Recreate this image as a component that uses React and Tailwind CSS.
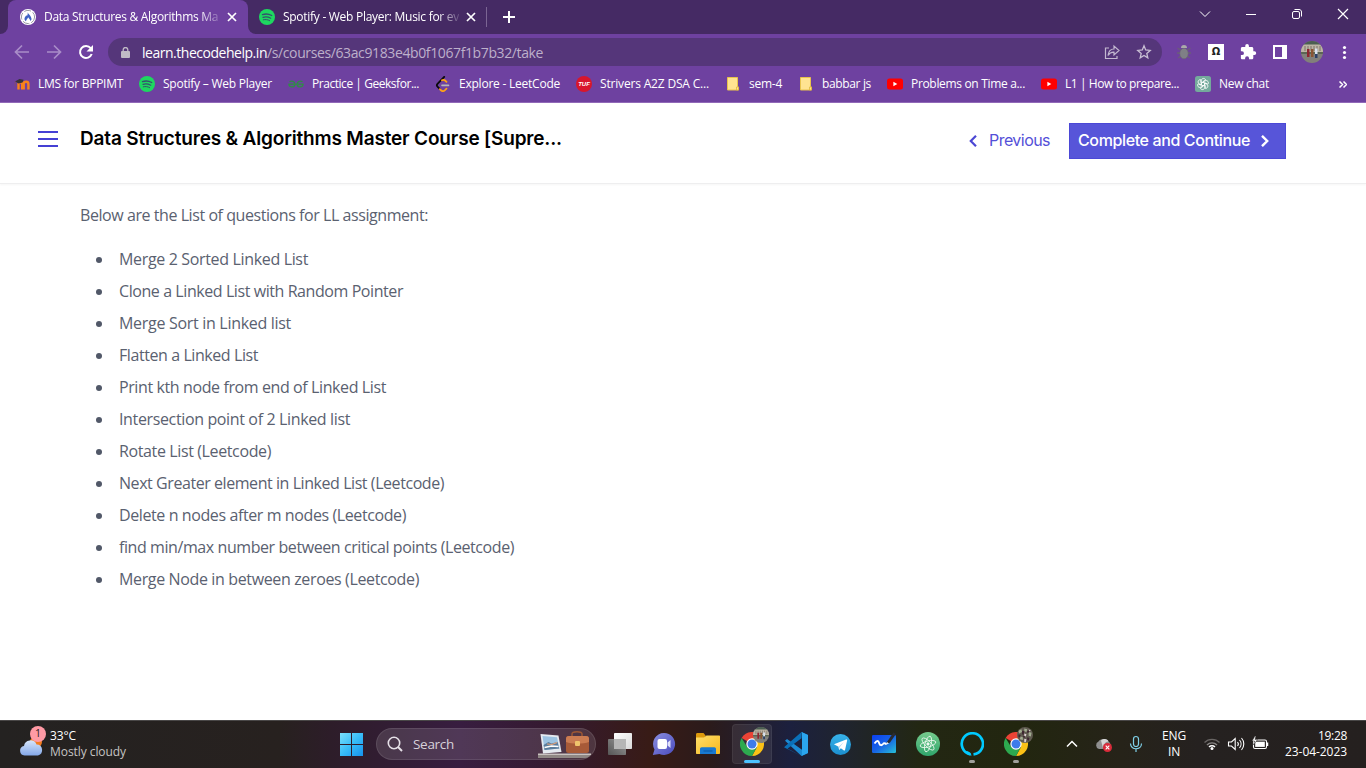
import React, { useLayoutEffect, useRef, useState } from "react";

/* Text run whose tracking is adjusted so that it fills a given width. */
function Label({ w, children, className = "" }) {
  const ref = useRef(null);
  const [tracking, setTracking] = useState(0);
  useLayoutEffect(() => {
    const natural = ref.current.getBoundingClientRect().width;
    setTracking((w - natural) / ref.current.textContent.length);
  }, [w]);
  return (
    <span className={`block shrink-0 whitespace-pre ${className}`} style={{ width: w }}>
      <span ref={ref} className="inline-block" style={{ letterSpacing: tracking }}>
        {children}
      </span>
    </span>
  );
}

const Spotify = () => (
  <svg className="size-4 shrink-0" viewBox="0 0 16 16" fill="none" strokeLinecap="round">
    <circle cx="8" cy="8" r="8" fill="#1ed760" />
    <path d="M3.500 5.600c3-.9 6.500-.6 9.200.9" stroke="#35506d" strokeWidth="1.400" />
    <path d="M4 8.300c2.600-.7 5.400-.4 7.700.9" stroke="#35506d" strokeWidth="1.200" />
    <path d="M4.300 10.800c2.200-.5 4.400-.3 6.300.8" stroke="#35506d" strokeWidth="1" />
  </svg>
);

const CodeHelp = () => (
  <svg className="size-4 shrink-0" viewBox="0 0 16 16" fill="none">
    <circle cx="8" cy="8" r="8" fill="#fff" />
    <circle cx="8" cy="8" r="6.600" stroke="#8d8f99" strokeWidth=".9" strokeDasharray="7 2" />
    <path d="M7.800 3.200c.3 2 3.400 3.200 3.700 6.600.1.900-.4 1.700-1.100 2.200-.3-1.700-1.400-2.500-2.200-3.800-.6 1.700-1.900 2.200-2.200 4C4.900 11.500 4.300 10.600 4.500 9.500c.2-1.400 1.300-2.200 1.700-3.300l.8.900c.6-1.200.9-2.400.8-3.900z" fill="#3f62c4" />
  </svg>
);

const Close = () => (
  <svg className="h-[10px] w-[10px] shrink-0" viewBox="0 0 10 10" stroke="#fff" strokeWidth="1.700">
    <path d="M1 1l8 8M9 1L1 9" />
  </svg>
);

const Moodle = () => (
  <svg className="size-4 shrink-0" viewBox="0 0 16 16" fill="none">
    <path d="M4.500 13.500V8.200c0-2.600 3.700-2.600 3.700 0v5.300M9.700 13.500V8c0-3 4.700-3 4.700 0v5.500" stroke="#f7821b" strokeWidth="2.400" />
    <path d="M1 5.500L5.500 3l4 .8-1 2.600-3.800 1z" fill="#38333a" />
    <path d="M1.200 5.500v5" stroke="#8a4b63" strokeWidth=".8" />
  </svg>
);

const Geeks = () => (
  <svg className="size-4 shrink-0" viewBox="0 0 16 16" fill="none" stroke="#2f8d46" strokeWidth="1.300">
    <path d="M.3 8.200h15.400M1.500 5.700C3.500 4.300 6.800 5.300 6.800 8.200c0 3.500-5.400 3.800-5.900 0M14.500 5.700C12.500 4.300 9.200 5.300 9.200 8.200c0 3.500 5.400 3.800 5.900 0" />
  </svg>
);

const Leet = () => (
  <svg className="size-4 shrink-0" viewBox="0 0 16 16" fill="none" strokeLinecap="round">
    <path d="M9.200.9L2.500 7.800c-.8.900-.8 2 0 2.800l2.200 2.300" stroke="#0a0a0a" strokeWidth="1.800" />
    <path d="M7 4.300c1.300-.8 2.200-.6 3.100.2l1.400 1.300M4.900 13.100l1.100 1.200c1.200 1 2.700.9 3.700 0l1.800-1.700" stroke="#ffa116" strokeWidth="1.800" />
    <path d="M7 9.400h6.500" stroke="#b7b7b9" strokeWidth="1.600" />
  </svg>
);

const Tuf = () => (
  <span className="flex size-4 shrink-0 items-center justify-center rounded-full bg-[#d8162c] font-['Liberation_Sans'] text-[6px] font-bold italic leading-none text-white">
    TUF
  </span>
);

const Folder = () => (
  <svg className="size-4 shrink-0" viewBox="0 0 16 16">
    <path d="M2.500 1.500h10v9.500h1v3h-11z" fill="#ffe391" stroke="#e8c34c" strokeWidth="1" />
    <path d="M11.500 11h2v3h-2z" fill="#ffe391" stroke="#e0b73c" strokeWidth=".8" />
  </svg>
);

const Youtube = () => (
  <svg className="size-4 shrink-0" viewBox="0 0 16 16">
    <rect x="0" y="2.500" width="16" height="11" rx="2.500" fill="#f00" />
    <path d="M6.400 5.700v4.600L10.300 8z" fill="#fff" />
  </svg>
);

const petals = [0, 60, 120, 180, 240, 300];
const Gpt = () => (
  <svg className="size-4 shrink-0" viewBox="0 0 16 16" fill="none" stroke="#fff" strokeWidth=".8">
    <rect width="16" height="16" rx="2.500" fill="#74aa9c" stroke="none" />
    {petals.map((a) => (
      <path key={a} transform={`rotate(${a} 8 8)`} d="M8 9.900L6.300 8.900V4.700C6.300 2 9.900 1.700 10.600 3.900L8 5.600" />
    ))}
  </svg>
);

const bookmarks = [
  [Moodle, "LMS for BPPIMT", 85],
  [Spotify, "Spotify – Web Player", 109],
  [Geeks, "Practice | Geeksfor...", 107],
  [Leet, "Explore - LeetCode", 101],
  [Tuf, "Strivers A2Z DSA C...", 109],
  [Folder, "sem-4", 33],
  [Folder, "babbar js", 49],
  [Youtube, "Problems on Time a...", 114],
  [Youtube, "L1 | How to prepare...", 114],
  [Gpt, "New chat", 50],
];

function TabStrip() {
  return (
    <div className="flex h-[34px] bg-[#452a64] text-[12px] text-white">
      <div className="h-[34px] w-2 bg-[#6e41a0]">
        <div className="h-full w-full rounded-br-lg bg-[#452a64]" />
      </div>
      <div className="flex w-[240px] items-center rounded-t-lg bg-[#6e41a0] pl-3">
        <CodeHelp />
        <div className="ml-2 w-[175px] [mask-image:linear-gradient(to_right,#000_155px,transparent_180px)]">
          <Label w={174}>Data Structures &amp; Algorithms Ma</Label>
        </div>
        <span className="ml-2"><Close /></span>
      </div>
      <div className="h-[34px] w-2 bg-[#6e41a0]">
        <div className="h-full w-full rounded-bl-lg bg-[#452a64]" />
      </div>
      <div className="flex items-center pl-[3px]">
        <Spotify />
        <div className="ml-2 w-[176px] [mask-image:linear-gradient(to_right,#000_155px,transparent_180px)]">
          <Label w={176}>Spotify - Web Player: Music for ev</Label>
        </div>
        <span className="ml-[7px]"><Close /></span>
        <div className="ml-[10px] h-5 w-px bg-[#7b6593]" />
        <svg className="ml-4 size-3" viewBox="0 0 12 12" stroke="#fff" strokeWidth="2"><path d="M6 0v12M0 6h12" /></svg>
      </div>
      <div className="ml-auto flex h-7 items-center">
        <svg className="h-4 w-[46px]" viewBox="0 0 46 16" fill="none" stroke="#fff"><path d="M18 5.500l5 5 5-5" /></svg>
        <svg className="h-4 w-[46px]" viewBox="0 0 46 16" fill="none" stroke="#fff"><path d="M18 8.500h10" /></svg>
        <svg className="h-4 w-[46px]" viewBox="0 0 46 16" fill="none" stroke="#fff">
          <rect x="18.500" y="5.500" width="7" height="7" rx="1.500" />
          <path d="M20.500 3.500h4.500c1.500 0 2.500 1 2.500 2.500v4.500" />
        </svg>
        <svg className="h-4 w-[46px]" viewBox="0 0 46 16" fill="none" stroke="#fff" strokeWidth="1.200"><path d="M18 3l10 10M28 3L18 13" /></svg>
      </div>
    </div>
  );
}

const Photo = ({ crowd }) => (
  <svg className="size-full" viewBox="0 0 22 22">
    <clipPath id={crowd ? "pc" : "pa"}><circle cx="11" cy="11" r="11" /></clipPath>
    {crowd ? (
      <g clipPath="url(#pc)">
        <rect width="22" height="22" fill="#5f5a4f" />
        <path d="M2 5l4-2 1 4-4 2zM10 2l4 1-1 4-3-1zM16 7l4 1-1 5-3-1zM5 13l3 1v4l-4-1z" fill="#a3ad92" />
        <path d="M7 5l3 1-1 5-2-1zM14 5h3l-1 3h-2zM2 10l3 1-1 3H2zM14 14l3 1-1 4-2-1zM8 12l3 1-1 3z" fill="#3d2430" />
        <path d="M10 9l3 1-1 3-2-1zM10 16l3 1-1 4h-2zM16 3l3 2-2 1z" fill="#e0d0d6" />
      </g>
    ) : (
      <g clipPath="url(#pa)">
        <rect width="22" height="22" fill="#82807a" />
        <rect width="22" height="4" fill="#4b5f52" />
        <rect y="3.500" width="22" height="7.500" fill="#bdb5a4" />
        <path d="M4 5v5M7 5v5M10 5v5M13 5v5M16 5v5M19 5v5" stroke="#7a736b" strokeWidth="1" />
        <rect y="11" width="22" height="2" fill="#5b6654" />
        <path d="M6 8h2.500v8H6z" fill="#8e2530" />
        <path d="M10 8h2.500v8H10z" fill="#8a5532" />
        <path d="M14 7.500h2.500V13H14z" fill="#dae3f1" />
        <path d="M14 13h2.500v4H14z" fill="#2c4168" />
      </g>
    )}
  </svg>
);

function Toolbar() {
  return (
    <div className="flex h-9 items-center bg-[#6e41a0]">
      <svg className="ml-[6px] h-8 w-8" viewBox="-16 -16 32 32" fill="none" stroke="#a98dc8" strokeWidth="1.700"><path d="M7 0H-6M0-6.500L-6.500 0 0 6.500" /></svg>
      <svg className="h-8 w-8" viewBox="-16 -16 32 32" fill="none" stroke="#a98dc8" strokeWidth="1.700"><path d="M-7 0H6M0-6.500L6.500 0 0 6.500" /></svg>
      <svg className="h-8 w-8" viewBox="-16 -16 32 32" fill="none" stroke="#fff" strokeWidth="2"><path d="M4.700-3.800A6 6 0 1 0 5.700 2" /><path d="M7-7v6.500H.5z" fill="#fff" stroke="none" /></svg>
      <div className="ml-[6px] flex h-7 w-[1054px] items-center rounded-full bg-[#55367a] pl-[13px] text-[14px] text-[#bdb0cb]">
        <svg className="h-[11px] w-[9px]" viewBox="0 0 9 11" fill="none"><rect y="4" width="9" height="7" rx="1" fill="#c0bac6" /><path d="M2.200 5V2.800a2.300 2.300 0 0 1 4.600 0V5" stroke="#c0bac6" strokeWidth="1.300" /></svg>
        <Label w={125} className="ml-3 text-white">learn.thecodehelp.in</Label>
        <Label w={276}>/s/courses/63ac9183e4b0f1067f1b7b32/take</Label>
        <svg className="ml-auto h-8 w-8" viewBox="-16 -16 32 32" fill="none" stroke="#c3b8d0" strokeWidth="1.200">
          <path d="M-3-4h-3.500v10.500H5V4" />
          <path d="M-4 3.500C-3.500-.5-1.500-3 2-3v-3l5 4.500-5 4.500V.2C-.8 0-2.500 1-4 3.500z" />
        </svg>
        <svg className="mr-[2px] h-8 w-8" viewBox="-16 -16 32 32" fill="none" stroke="#c9bfd4" strokeWidth="1.300"><path d="M0-6.200l1.700 4.200 4.500.4-3.400 3 1 4.500L0 3.500-3.800 5.900l1-4.500-3.400-3 4.500-.4z" /></svg>
      </div>
      <div className="ml-[6px] flex items-center">
        <svg className="h-8 w-8" viewBox="-16 -16 32 32" fill="none" stroke="#6b5d78" strokeWidth="1.300">
          <path d="M-6.500-4l3 2M6.500-4l-3 2M-7 1H7M-6 6l3-2M6 6L3 4" />
          <ellipse cy="1.500" rx="4.200" ry="5.300" fill="#7f7f86" stroke="#68646f" strokeWidth=".6" />
          <path d="M-3-4a3 3 0 0 1 6 0z" fill="#aaa" stroke="none" />
        </svg>
        <span className="mx-2 flex size-4 items-center justify-center bg-white font-['DejaVu_Sans'] text-[10px] font-bold leading-none text-[#222]">Ω</span>
        <svg className="h-8 w-8" viewBox="-4.500 -4 32 32" fill="#fff"><path transform="scale(.73) translate(4 4.500)" d="M20.500 11H19V7c0-1.100-.9-2-2-2h-4V3.500a2.500 2.500 0 0 0-5 0V5H4c-1.100 0-2 .9-2 2v3.800h1.500a2.700 2.700 0 0 1 0 5.400H2V20c0 1.100.9 2 2 2h3.800v-1.500a2.700 2.700 0 0 1 5.400 0V22H17c1.100 0 2-.9 2-2v-4h1.500a2.500 2.500 0 0 0 0-5z" /></svg>
        <svg className="h-8 w-8" viewBox="-16 -16 32 32"><path d="M-7-7H7V7H-7zM-5-5V5H2V-5z" fill="#fff" fillRule="evenodd" /></svg>
        <span className="mx-[5px] size-[22px]"><Photo /></span>
        <svg className="h-8 w-8" viewBox="-16 -16 32 32" fill="#fff"><circle cx=".5" cy="-4.500" r="1.600" /><circle cx=".5" cy=".5" r="1.600" /><circle cx=".5" cy="5.500" r="1.600" /></svg>
      </div>
    </div>
  );
}

function Header() {
  return (
    <header className="flex h-[81px] shrink-0 items-start border-b border-[#eeeeef] pl-[38px] pr-20 shadow-[0_1px_2px_rgba(0,0,0,0.04)]">
      <div className="mt-7 flex w-5 flex-col gap-[5px]">
        <div className="h-0.5 bg-[#4540d4]" />
        <div className="h-0.5 bg-[#4540d4]" />
        <div className="h-0.5 bg-[#4540d4]" />
      </div>
      <h1 className="ml-[22px] mt-[22px] font-[Inter] text-[19px] font-semibold leading-7 text-black">
        <Label w={482}>Data Structures &amp; Algorithms Master Course [Supre...</Label>
      </h1>
      <div className="ml-auto mt-5 flex h-9 items-center font-[Inter] text-[16px] leading-6 text-[#5450d8]">
        <svg className="h-3 w-2" viewBox="0 0 8 12" fill="none" stroke="#4b47d4" strokeWidth="2.200"><path d="M7 .8L1.800 6 7 11.200" /></svg>
        <Label w={61} className="mb-0.5 ml-3">Previous</Label>
        <button className="ml-[19px] flex h-9 w-[217px] items-center border border-[#4b48d6] bg-[#5755d9] pl-2 font-medium text-white">
          <Label w={172} className="mb-0.5">Complete and Continue</Label>
          <svg className="ml-[11px] h-3 w-2" viewBox="0 0 8 12" fill="none" stroke="#fff" strokeWidth="2.400"><path d="M1 .8L6.200 6 1 11.200" /></svg>
        </button>
      </div>
    </header>
  );
}

const questions = [
  ["Merge 2 Sorted Linked List", 189],
  ["Clone a Linked List with Random Pointer", 284],
  ["Merge Sort in Linked list", 172],
  ["Flatten a Linked List", 139],
  ["Print kth node from end of Linked List", 267],
  ["Intersection point of 2 Linked list", 231],
  ["Rotate List (Leetcode)", 152],
  ["Next Greater element in Linked List (Leetcode)", 325],
  ["Delete n nodes after m nodes (Leetcode)", 287],
  ["find min/max number between critical points (Leetcode)", 395],
  ["Merge Node in between zeroes (Leetcode)", 300],
];

const Chrome = ({ crowd }) => (
  <div className="relative size-6">
    <svg className="size-6" viewBox="0 0 24 24">
      <path d="M12 12L1.600 6A12 12 0 0 1 22.400 6z" fill="#ea4335" />
      <path d="M12 6.500h10.700A12 12 0 0 1 12 24l5-9z" fill="#fbc116" />
      <path d="M1.600 6L7.200 15 12 17.500 16.800 15 12 24A12 12 0 0 1 1.600 6z" fill="#2da94f" />
      <circle cx="12" cy="12" r="5.700" fill="#fff" />
      <circle cx="12" cy="12" r="4.500" fill="#3e7bea" />
    </svg>
    <span className="absolute -top-[5px] left-[13px] size-4"><Photo crowd={crowd} /></span>
  </div>
);

const TaskView = () => (
  <svg className="size-6" viewBox="0 0 24 24">
    <defs>
      <linearGradient id="tv" x1="0" y1="0" x2="1" y2="1"><stop stopColor="#fff" /><stop offset="1" stopColor="#d9d9d9" /></linearGradient>
      <linearGradient id="tv2" x1="1" y1="0" x2="0" y2="1"><stop stopColor="#999" /><stop offset="1" stopColor="#555" /></linearGradient>
    </defs>
    <rect x="6" y="1" width="18" height="16" rx=".8" fill="url(#tv)" />
    <rect y="7" width="18" height="16" rx=".8" fill="url(#tv2)" />
    <rect x="6" y="7" width="12" height="10" fill="#b6b6b6" />
  </svg>
);
const Chat = () => (
  <svg className="size-6" viewBox="0 0 24 24">
    <defs><linearGradient id="ch" x1="0" y1="0" x2="1" y2="1"><stop stopColor="#8a8ee0" /><stop offset="1" stopColor="#4a4bbd" /></linearGradient></defs>
    <path d="M12 1a11 11 0 1 1-4.500 21L.8 23l1.700-5.500A11 11 0 0 1 12 1z" fill="url(#ch)" />
    <rect x="5.500" y="7" width="9.500" height="10" rx="2" fill="#fff" />
    <path d="M15.500 10.500L18.500 8v8l-3-2.500z" fill="#dfe0fb" />
  </svg>
);
const Explorer = () => (
  <svg className="size-6" viewBox="0 0 24 24">
    <defs><linearGradient id="ex" x1="0" y1="0" x2="1" y2="1"><stop stopColor="#ffdf6b" /><stop offset="1" stopColor="#f6b81c" /></linearGradient></defs>
    <path d="M0 2.500C0 1.500.6 1 1.500 1h6l2 2.500V9H0z" fill="#dd9a0c" />
    <path d="M0 5.500h8l2.500-2H23c.6 0 1 .4 1 1V21c0 .6-.4 1-1 1H1c-.6 0-1-.4-1-1z" fill="url(#ex)" />
    <path d="M4 22v-5c0-1 .7-1.700 1.700-1.700h12.600c1 0 1.700.7 1.700 1.700v5z" fill="#1879d0" />
    <path d="M7.500 19h9" stroke="#0c5cab" strokeWidth="1.200" />
  </svg>
);
const VsCode = () => (
  <svg className="size-6" viewBox="0 0 24 24">
    <path d="M17.500 0L24 3v18l-6.500 3L1 8.800 3 7l15 10.800V6z" fill="#1b8ad3" />
    <path d="M17.500 24L0 15.300 17.500 0v6.300L3 17 1 15.200z" fill="#0a70b8" />
    <path d="M17.500 0L24 3v18l-6.500 3c.4-.5.500-.8.500-1.300V1.500c0-.6-.1-1-.5-1.500z" fill="#2ba5ee" />
  </svg>
);
const Telegram = () => (
  <svg className="size-[21px]" viewBox="0 0 24 24">
    <defs><linearGradient id="tg" x2="0" y2="1"><stop stopColor="#37b3ea" /><stop offset="1" stopColor="#1c8fd0" /></linearGradient></defs>
    <circle cx="12" cy="12" r="12" fill="url(#tg)" />
    <path d="M4.500 11.800L18.500 6.400c.8-.2 1.300.2 1 1.200l-2.300 10.600c-.2.800-.7.900-1.300.6L12.400 16.200l-2 2-.6-3.700-5.300-2.700z" fill="#fff" />
    <path d="M9.800 14.500l6-5.300-4.700 5.800-.7 3.200z" fill="#b9d9ee" />
  </svg>
);
const Whiteboard = () => (
  <svg className="size-6" viewBox="0 0 24 24">
    <defs><linearGradient id="wb" x1="0" y1="0" x2="1" y2="1"><stop stopColor="#0b3ff2" /><stop offset=".5" stopColor="#1763e5" /><stop offset="1" stopColor="#27c1d6" /></linearGradient></defs>
    <rect y="3" width="24" height="18" rx="1.300" fill="url(#wb)" />
    <path d="M2.500 11.500c2.500-3.500 4-3 4.700-.3.700 2.600 2.500 2.400 3.800.8 1-1.300 2-.9 3.500.2" fill="none" stroke="#fff" strokeWidth="1.900" />
    <path d="M14.500 10.500l1.500-2L21.500.3 24 2l-6 8.500-3 1.500z" fill="#292b31" />
    <path d="M13.500 13l1.500-3 2 1.500z" fill="#e7ecf4" />
  </svg>
);
const Atom = () => (
  <svg className="size-6" viewBox="0 0 24 24" fill="none" stroke="#e5f5ea" strokeWidth=".9">
    <defs><linearGradient id="at" x2="0" y2="1"><stop stopColor="#76cb8d" /><stop offset="1" stopColor="#2fa56b" /></linearGradient></defs>
    <circle cx="12" cy="12" r="12" fill="url(#at)" stroke="none" />
    <ellipse cx="12" cy="12" rx="3" ry="8" transform="rotate(15 12 12)" />
    <ellipse cx="12" cy="12" rx="3" ry="8" transform="rotate(75 12 12)" />
    <ellipse cx="12" cy="12" rx="3" ry="8" transform="rotate(135 12 12)" />
    <circle cx="12" cy="12" r="1.200" fill="#fff" />
  </svg>
);
const Alexa = () => (
  <svg className="size-6" viewBox="0 0 24 24" fill="none" stroke="#00caff" strokeWidth="2.700">
    <path d="M10.500 22.300A10.600 10.600 0 1 1 13.500 22.400" />
    <path d="M11.500 23.700c-.2-2.300-2-3.700-4.500-4.600l-2 .5 3 2.800 3.500 1.300z" fill="#00caff" stroke="none" />
  </svg>
);

const apps = [
  [TaskView], [Chat], [Explorer], [Chrome, "active"], [VsCode], [Telegram], [Whiteboard], [Atom], [Alexa, "open"], [Chrome, "crowd"],
];

function Taskbar() {
  return (
    <footer className="flex h-12 items-center bg-[linear-gradient(to_right,#242221_0,#27211f_280px,#2d1d29_330px,#381d40_460px,#351a2f_560px,#381b16_650px,#2b1b1b_710px,#1c203e_790px,#1f2430_840px,#232713_920px,#22260f_1020px,#262319_1120px,#252120_1200px,#25201f_1366px)] text-white shadow-[inset_0_1px_0_#494747]">
      <div className="flex w-[330px] items-center pl-[19px]">
        <div className="relative mb-0.5 h-[29px] w-[26px]">
          <svg className="h-[29px] w-[26px]" viewBox="0 0 26 29">
            <defs><linearGradient id="cl" x2="0" y2="1"><stop stopColor="#d6e5fb" /><stop offset="1" stopColor="#84a8e9" /></linearGradient></defs>
            <circle cx="17" cy="13" r="6" fill="#f37b1f" />
            <path d="M5.500 26.500a4.800 4.800 0 0 1-.5-9.500 6.500 6.500 0 0 1 12.500-1.500 5.600 5.600 0 0 1 1.500 11z" fill="url(#cl)" />
          </svg>
          <span className="absolute -top-[3px] left-[11px] flex size-4 items-center justify-center rounded-full bg-[#ff9aa5] text-[10.500px] leading-none text-[#2a1a1c]">1</span>
        </div>
        <div className="mb-px ml-[5px] text-[12px] leading-4">
          <Label w={26}>33°C</Label>
          <Label w={76} className="text-[#c6c4c3]">Mostly cloudy</Label>
        </div>
      </div>
      <div className="flex w-[46px] justify-center pr-[3px]">
        <svg className="mt-px size-[23px]" viewBox="0 0 23 23">
          <defs><linearGradient id="wn" x1="0" y1="0" x2="23" y2="23" gradientUnits="userSpaceOnUse"><stop stopColor="#7be0fb" /><stop offset=".5" stopColor="#38bdf8" /><stop offset="1" stopColor="#1592ee" /></linearGradient></defs>
          <path d="M0 0h11v11H0zM12 0h11v11H12zM0 12h11v11H0zM12 12h11v11H12z" fill="url(#wn)" />
        </svg>
      </div>
      <div className="flex h-8 w-[220px] items-center rounded-full border border-white/10 bg-white/12 pl-[10px] text-[13.500px] text-[#d7d1da]">
        <svg className="size-4" viewBox="0 0 16 16" fill="none" stroke="#e6e1e8" strokeWidth="1.600"><circle cx="7" cy="7" r="5.700" /><path d="M11 11l4 4" strokeWidth="2" /></svg>
        <Label w={41} className="ml-[10px]">Search</Label>
        <svg className="ml-[84px] h-[27px] w-[54px]" viewBox="0 0 54 27">
          <path d="M0 23h53c-1 2-3 4-6 4H0z" fill="#8f8784" />
          <path d="M0 22.500h53v1.500H0z" fill="#c9c2c0" />
          <path d="M2.500 3l18 1.500 3 16.500L5 22.500z" fill="#e5eaf0" />
          <path d="M4.500 5l14.500 1.200 2.300 11.300L6.500 19z" fill="#9cc3e2" />
          <path d="M5.500 14l5-3 3 1.500 6-1.500 1.800 6.500L6.500 19z" fill="#5b7d9c" />
          <path d="M9 13l5 .5 5-2" stroke="#e2a179" strokeWidth="1.200" fill="none" />
          <path d="M6.500 16.500l7-1.500 7 .5" stroke="#fff" strokeWidth="1.500" fill="none" />
          <path d="M34 5V3c0-3 10-3 10 0v2" stroke="#9c5734" strokeWidth="1.500" fill="none" />
          <rect x="28" y="5" width="23" height="17" rx="2.500" fill="#a75a38" />
          <path d="M28 8c0-2 1-3 3-3h17c2 0 3 1 3 3v3c-6 2-17 2-23 0z" fill="#cb7c52" />
          <rect x="37" y="10" width="5" height="5" rx="1" fill="#f0c46c" />
        </svg>
      </div>
      <div className="ml-0.5 flex">
        {apps.map(([Icon, state], i) => (
          <div key={i} className="flex w-11 justify-center">
            <div className={`relative flex h-10 w-10 items-center justify-center rounded ${state === "active" ? "border border-white/6 bg-white/8" : ""}`}>
              <Icon crowd={state === "crowd"} />
              {state === "active" && <span className="absolute bottom-0 h-[3px] w-4 rounded-full bg-[#4cc2ff]" />}
              {(state === "open" || state === "crowd") && <span className="absolute bottom-px h-[3px] w-1.5 rounded-full bg-[#a0a09b]" />}
            </div>
          </div>
        ))}
      </div>
      <div className="ml-auto flex items-center pr-[19px]">
        <svg className="size-8" viewBox="-16 -16 32 32" fill="none" stroke="#fff" strokeWidth="1.500"><path d="M-5 2.500l5-5 5 5" /></svg>
        <svg className="size-8" viewBox="-16 -16 32 32">
          <path d="M-5 5a4 4 0 0 1-.5-7.500C-4-6 3-6 4.500-2.500 8 0 7 5 4 5z" fill="#8f8f8f" />
          <path d="M-3-3.500C0-6 4-5 4.500-2.500 2-3-1 1-1 4z" fill="#d5d5d5" />
          <circle cx="3.500" cy="3.500" r="4.500" fill="#d92b3a" />
          <path d="M1.700 1.700l3.600 3.600M5.300 1.700L1.700 5.300" stroke="#fff" strokeWidth="1.100" />
        </svg>
        <svg className="size-8" viewBox="-16 -16 32 32" fill="none" stroke="#7fd0e8" strokeWidth="1.200"><rect x="-2.500" y="-7.500" width="5" height="10" rx="2.500" /><path d="M-5.500-.5C-5.500 6.500 5.500 6.500 5.500-.5M0 5v3" /></svg>
        <div className="ml-[9px] flex w-[26px] flex-col items-center text-[12px] leading-4">
          <Label w={24}>ENG</Label>
          <Label w={12}>IN</Label>
        </div>
        <svg className="ml-[13px] h-8 w-6" viewBox="-12 -16 24 32" fill="none" strokeWidth="1.400">
          <path d="M-7.500-1.500a10.500 10.500 0 0 1 15 0" stroke="#696564" />
          <path d="M-5 1a7 7 0 0 1 10 0" stroke="#8a8786" />
          <path d="M-3 3a4.200 4.200 0 0 1 6 0" stroke="#fff" />
          <circle cy="4.500" r="1.500" fill="#fff" />
        </svg>
        <svg className="h-8 w-6" viewBox="-12 -16 24 32" fill="none" stroke="#fff" strokeWidth="1.100">
          <path d="M-7.500-2h3L-.8-5.500v11L-4.500 2h-3zM1.500-2a3 3 0 0 1 0 4M3.500-4a6 6 0 0 1 0 8M5.500-6a9 9 0 0 1 0 12" />
        </svg>
        <svg className="h-8 w-6" viewBox="-12 -16 24 32" fill="none" stroke="#fff" strokeWidth="1.100">
          <rect x="-6.500" y="-4" width="13" height="8.500" rx="1.500" />
          <rect x="-4.800" y="-2.300" width="9.600" height="5.200" fill="#fff" stroke="none" />
          <path d="M7.500-1.500V2" strokeWidth="1.500" />
          <path d="M-5-8l-3 5h2.500L-6.500 1l4-5.500H-5l1-3.500z" fill="#fff" stroke="#252120" strokeWidth=".5" />
        </svg>
        <div className="mb-px ml-[13px] flex w-[62px] flex-col items-end text-[12px] leading-4">
          <Label w={29}>19:28</Label>
          <Label w={62}>23-04-2023</Label>
        </div>
      </div>
    </footer>
  );
}

export default function App() {
  return (
    <div className="flex h-[768px] w-[1366px] flex-col overflow-hidden bg-white font-['Open_Sans',sans-serif]">
      <TabStrip />
      <Toolbar />
      <div className="flex h-[33px] items-center gap-4 border-b border-[#9169b8] bg-[#6e41a0] pb-1 pl-3.5 text-[12px] text-white">
        {bookmarks.map(([Icon, text, w], i) => (
          <div key={i} className="flex h-8 items-center gap-2">
            <Icon />
            <Label w={w} className="pb-px">{text}</Label>
          </div>
        ))}
        <svg className="ml-auto mr-[19px] h-[7px] w-2" viewBox="0 0 8 7" fill="none" stroke="#fff" strokeWidth="1.500"><path d="M.5.5l3 3-3 3M4.500.5l3 3-3 3" /></svg>
      </div>
      <Header />
      <main className="flex-1 pl-20 pt-[15px] text-[16px] text-[#5a6170]">
        <p className="h-8 leading-8"><Label w={348}>Below are the List of questions for LL assignment:</Label></p>
        <ul className="mt-3">
          {questions.map(([text, w]) => (
            <li key={text} className="flex h-8 items-center pl-4 leading-8">
              <span className="mr-[17px] mt-0.5 size-1.5 rounded-full bg-[#515868]" />
              <Label w={w}>{text}</Label>
            </li>
          ))}
        </ul>
      </main>
      <Taskbar />
    </div>
  );
}
